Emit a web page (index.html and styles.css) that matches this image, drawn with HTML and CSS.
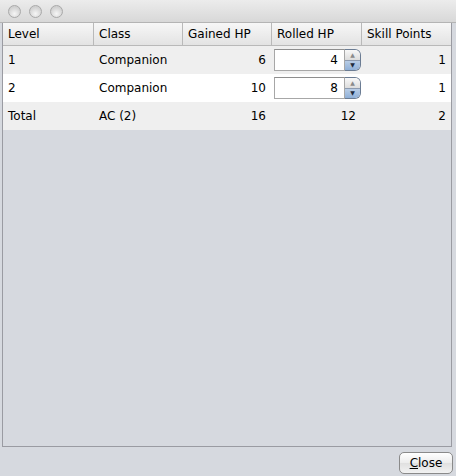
FILE: index.html
```html
<!DOCTYPE html>
<html>
<head>
<meta charset="utf-8">
<link rel="stylesheet" href="styles.css">
</head>
<body>
<div class="window">
  <div class="titlebar">
    <span class="light"></span><span class="light"></span><span class="light"></span>
  </div>
  <div class="content">
    <div class="scrollpane">
      <div class="table">
        <div class="row header">
          <div class="cell">Level</div>
          <div class="cell">Class</div>
          <div class="cell">Gained HP</div>
          <div class="cell">Rolled HP</div>
          <div class="cell">Skill Points</div>
        </div>
        <div class="row odd">
          <div class="cell">1</div>
          <div class="cell">Companion</div>
          <div class="cell num">6</div>
          <div class="cell spin"><div class="spinner"><span class="field">4</span><span class="arrows"><span class="up">&#9650;</span><span class="down">&#9660;</span></span></div></div>
          <div class="cell num">1</div>
        </div>
        <div class="row even">
          <div class="cell">2</div>
          <div class="cell">Companion</div>
          <div class="cell num">10</div>
          <div class="cell spin"><div class="spinner"><span class="field">8</span><span class="arrows"><span class="up">&#9650;</span><span class="down">&#9660;</span></span></div></div>
          <div class="cell num">1</div>
        </div>
        <div class="row odd">
          <div class="cell">Total</div>
          <div class="cell">AC (2)</div>
          <div class="cell num">16</div>
          <div class="cell num">12</div>
          <div class="cell num">2</div>
        </div>
      </div>
    </div>
    <div class="buttons">
      <button class="btn"><u>C</u>lose</button>
    </div>
  </div>
</div>
</body>
</html>
```
FILE: styles.css
```css
html, body {
  margin: 0;
  padding: 0;
}
body {
  width: 456px;
  height: 476px;
  font-family: "DejaVu Sans", sans-serif;
  font-size: 12px;
  color: #000;
  background: #d6d9df;
}
.window {
  display: flex;
  flex-direction: column;
  height: 476px;
}
.titlebar {
  height: 23px;
  box-sizing: border-box;
  background: linear-gradient(#ececec, #d8d8d8);
  border-bottom: 1px solid #b4b4b4;
  display: flex;
  align-items: center;
  gap: 8px;
  padding-left: 8px;
}
.light {
  width: 13px;
  height: 13px;
  border-radius: 50%;
  box-sizing: border-box;
  border: 1px solid #a9a9a9;
  background: radial-gradient(circle at 50% 70%, #f6f6f6, #d0d0d0 70%);
}
.content {
  flex: 1;
  display: flex;
  flex-direction: column;
  padding: 0 2px 0 2px;
}
.scrollpane {
  flex: 1;
  border: 1px solid #9a9ba2;
  border-top: none;
  background: #d6d9df;
  margin-right: 2px;
}
.table {
  display: flex;
  flex-direction: column;
}
.row {
  display: grid;
  grid-template-columns: 91px 89px 89px 90px 90px;
}
.header {
  height: 23px;
  background: linear-gradient(#f7f7f7, #e3e3e3);
  border-bottom: 1px solid #b9b9b9;
  box-sizing: border-box;
}
.header .cell {
  border-right: 1px solid #b9b9b9;
  padding-left: 5px;
  display: flex;
  align-items: center;
}
.header .cell:last-child {
  border-right: none;
}
.row.odd, .row.even {
  height: 28px;
}
.odd { background: #efefef; }
.even { background: #ffffff; }
.cell {
  box-sizing: border-box;
  padding: 0 6px 0 5px;
  display: flex;
  align-items: center;
  white-space: nowrap;
}
.num {
  justify-content: flex-end;
}
.spin {
  padding: 0 0 0 2px;
  background: #ffffff;
}
.odd .spin { background: #efefef; }
.spinner {
  display: flex;
  height: 22px;
  width: 87px;
}
.field {
  flex: 1;
  box-sizing: border-box;
  border: 1px solid #a7a7a7;
  border-top-color: #8e8e8e;
  background: #fff;
  display: flex;
  align-items: center;
  justify-content: flex-end;
  padding-right: 6px;
}
.arrows {
  width: 16px;
  box-sizing: border-box;
  border: 1px solid #6b7c93;
  border-left: none;
  border-radius: 0 6px 6px 0;
  display: flex;
  flex-direction: column;
  overflow: hidden;
}
.up, .down {
  flex: 1;
  font-size: 6px;
  display: flex;
  align-items: center;
  justify-content: center;
  line-height: 1;
}
.up {
  background: linear-gradient(#f8f8f8, #dcdcdc);
  color: #8a8a8a;
  border-bottom: 1px solid #8d9bb0;
}
.down {
  background: linear-gradient(#b9cde6, #8fb0d8);
  color: #1d2a3b;
}
.buttons {
  height: 29px;
  box-sizing: border-box;
  display: flex;
  justify-content: flex-end;
  align-items: flex-end;
  padding: 0 1px 2px 0;
}
.btn {
  font-family: "DejaVu Sans", sans-serif;
  font-size: 12px;
  height: 22px;
  width: 54px;
  border: 1px solid #8a8a8a;
  border-radius: 5px;
  background: linear-gradient(#ffffff, #ececec 50%, #e0e0e0 51%, #f2f2f2);
  padding: 0;
  color: #000;
}
```
